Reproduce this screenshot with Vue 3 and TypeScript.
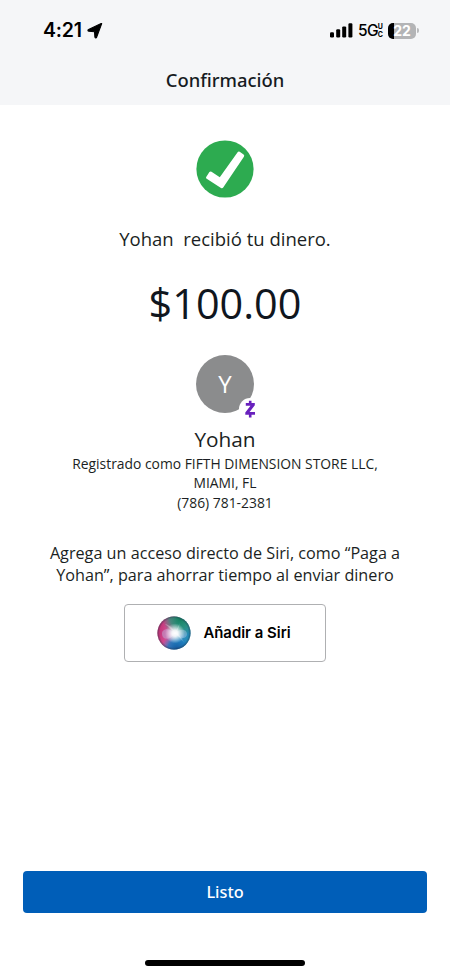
<script setup lang="ts">
const recipient = 'Yohan'
const amount = '$100.00'
const signalBars: { x: number; y: number; h: number }[] = [
  { x: 0, y: 9.2, h: 5.3 },
  { x: 6.2, y: 6.3, h: 8.2 },
  { x: 12.2, y: 3.4, h: 11.1 },
  { x: 18.4, y: 0.3, h: 14.2 },
]
</script>

<template>
  <main class="screen">
    <header class="header">
      <div class="status">
        <div class="clock">
          <span class="time">4:21</span>
          <svg class="location" width="16" height="16" viewBox="0 0 16 16">
            <path d="M14.6 .9 9.6 14.2C9.200 15.200 8 15 7.900 13.900L7.500 8.700 1.900 8.300C.8 8.200.6 7 1.600 6.600L14.200 .6C14.600.4 14.800.500 14.600.9Z" stroke="#000" stroke-width="1.1" stroke-linejoin="round" />
          </svg>
        </div>
        <div class="indicators">
          <svg width="23" height="15" viewBox="0 0 23 15">
            <rect v-for="bar in signalBars" :key="bar.x" :x="bar.x" :y="bar.y" width="4" :height="bar.h" rx="1.2" />
          </svg>
          <span class="network">5G</span>
          <span class="band"><span>U</span><span>C</span></span>
          <div class="battery"><span>22</span></div>
          <span class="battery-tip"></span>
        </div>
      </div>
      <h1 class="title">Confirmación</h1>
    </header>

    <section class="content">
      <svg class="check" width="58" height="58" viewBox="0 0 58 58">
        <circle cx="29" cy="29" r="28.600" fill="#2dab50" />
        <path d="M10.200 36.900 13.400 32.100Q14.300 31.100 15.500 31.800L23.800 37.200 41.600 12.200Q42.500 11 43.700 11.800L47.600 14.600Q48.700 15.500 47.900 16.700L27.200 47.500Q26.300 48.700 25 47.900L10.700 38.800Q9.500 38 10.200 36.900Z" fill="#fff" />
      </svg>
      <p class="message">{{ recipient }}&nbsp; recibió tu dinero.</p>
      <p class="amount">{{ amount }}</p>

      <div class="avatar">
        <span>Y</span>
        <svg class="zelle" width="22" height="22" viewBox="0 0 22 22">
          <circle cx="11" cy="11" r="11" fill="#fff" />
          <path d="M6.800 5H15.800V7.200L10.600 14.100H16V16.800H6.300V14.600L11.500 7.700H6.800ZM9.900 2.800H12.500V6H9.900ZM9.900 16H12.500V19.400H9.900Z" fill="#6820bd" />
        </svg>
      </div>
      <h2 class="name">{{ recipient }}</h2>
      <p class="details">
        <span>Registrado como FIFTH DIMENSION STORE LLC,</span><br />
        <span>MIAMI, FL</span><br />
        <span>(786) 781-2381</span>
      </p>
      <p class="hint">
        Agrega un acceso directo de Siri, como “Paga a<br />
        Yohan”, para ahorrar tiempo al enviar dinero
      </p>
      <button class="siri" type="button">
        <svg width="34" height="34" viewBox="0 0 34 34">
          <defs>
            <linearGradient id="orb" x1="0" y1=".4" x2="1" y2=".6">
              <stop offset="0" stop-color="#c02c70" />
              <stop offset=".38" stop-color="#d75a9f" />
              <stop offset=".6" stop-color="#4b9fc0" />
              <stop offset="1" stop-color="#1a86b4" />
            </linearGradient>
            <radialGradient id="green" cx=".68" cy=".08" r=".52">
              <stop offset="0" stop-color="#12805e" />
              <stop offset=".55" stop-color="#249174" stop-opacity=".8" />
              <stop offset="1" stop-color="#249174" stop-opacity="0" />
            </radialGradient>
            <radialGradient id="blue" cx=".58" cy="1" r=".46">
              <stop offset="0" stop-color="#15549b" />
              <stop offset=".6" stop-color="#1976bd" stop-opacity=".8" />
              <stop offset="1" stop-color="#2386cc" stop-opacity="0" />
            </radialGradient>
            <radialGradient id="glow" cx=".53" cy=".51" r=".3">
              <stop offset="0" stop-color="#fff" />
              <stop offset=".3" stop-color="#fff" stop-opacity=".9" />
              <stop offset="1" stop-color="#fff" stop-opacity="0" />
            </radialGradient>
            <radialGradient id="rim">
              <stop offset=".86" stop-color="#263448" stop-opacity="0" />
              <stop offset="1" stop-color="#263448" stop-opacity=".5" />
            </radialGradient>
          </defs>
          <circle cx="17" cy="17" r="16.600" fill="url(#orb)" />
          <circle cx="17" cy="17" r="16.600" fill="url(#green)" />
          <circle cx="17" cy="17" r="16.600" fill="url(#blue)" />
          <path d="M18 17C13 12 5 12 5 18s8 7 13-1c5-5 12-4 12 1s-7 6-12-1Z" fill="#b8cbed" opacity=".4" />
          <path d="M18 17 8 8C13 9 16 12 18 17L23 7 20 16 27 26Z" fill="#fff" opacity=".3" />
          <circle cx="17" cy="17" r="16.600" fill="url(#glow)" />
          <circle cx="17" cy="17" r="16.600" fill="url(#rim)" />
        </svg>
        <span>Añadir a Siri</span>
      </button>
    </section>

    <footer class="footer">
      <button class="done" type="button">Listo</button>
      <div class="home"></div>
    </footer>
  </main>
</template>

<style>
body {
  margin: 0;
  background: #fff;
}
</style>

<style scoped>
.screen {
  display: flex;
  flex-direction: column;
  width: 450px;
  height: 975px;
  overflow: hidden;
  background: #fff;
  color: #1b1f23;
  font-family: 'Open Sans', 'Noto Sans', sans-serif;
  text-align: center;
}
h1, h2, p { margin: 0; font-weight: 400; }
svg { display: block; flex: none; }
button { box-sizing: border-box; padding: 0; font: inherit; }

.header {
  box-sizing: border-box;
  height: 105px;
  background: #f5f6f8;
}
.status {
  box-sizing: border-box;
  display: flex;
  justify-content: space-between;
  height: 60px;
  padding: 20px 31px 0 43px;
  color: #000;
  font-family: Inter, sans-serif;
}
.clock, .indicators { display: flex; height: 21px; align-items: center; }
.time { font-size: 19.5px; font-weight: 600; line-height: 21px; letter-spacing: -.2px; }
.location { margin-left: 5px; }
.network { margin-left: 5px; font-size: 15.5px; font-weight: 500; letter-spacing: -.7px; }
.band { display: flex; flex-direction: column; margin-left: 0; margin-right: 1px; font-size: 7px; font-weight: 700; line-height: 8px; }
.battery {
  width: 28px;
  height: 16px;
  margin-left: 4px;
  border-radius: 5px;
  background: linear-gradient(90deg, #000 6px, #b3b4b6 6px);
  color: #fff;
  font-size: 14px;
  font-weight: 700;
  line-height: 16px;
}
.battery-tip { width: 2px; height: 5px; margin-left: 1px; border-radius: 0 2px 2px 0; background: #b9babc; }
.title { color: #161b22; font-family: 'Noto Sans', 'Open Sans', sans-serif; font-size: 18.4px; font-weight: 500; line-height: 40px; }

.content {
  display: flex;
  flex: 1;
  flex-direction: column;
  align-items: center;
}
.check { margin-top: 35px; }
.message { margin-top: 27px; font-size: 18.5px; line-height: 28px; }
.amount { margin-top: 20px; color: #10161e; font-size: 41.4px; line-height: 60px; }
.avatar {
  position: relative;
  width: 58px;
  height: 58px;
  margin-top: 22px;
  border-radius: 50%;
  background: #8b8c8d;
  color: #fff;
  font-size: 24px;
  line-height: 58px;
}
.zelle { position: absolute; left: 43px; top: 43px; }
.name { margin-top: 11px; font-size: 20.8px; line-height: 30px; }
.details { font-size: 13.86px; line-height: 19.4px; }
.hint { margin-top: 30px; font-size: 16.2px; line-height: 22px; }
.siri {
  display: flex;
  align-items: center;
  justify-content: center;
  gap: 12px;
  width: 202px;
  height: 58px;
  margin-top: 17.4px;
  padding-right: 2px;
  border: 1px solid #afb0b2;
  border-radius: 4px;
  background: #fff;
  color: #000;
  font-family: Inter, sans-serif;
  font-size: 14.9px;
  font-weight: 600;
}

.footer { display: flex; flex-direction: column; align-items: center; height: 104px; }
.done {
  width: 404px;
  height: 41.5px;
  border: 0;
  border-radius: 4px;
  background: #005eb8;
  color: #fff;
  font-family: 'Noto Sans', 'Open Sans', sans-serif;
  font-size: 16.3px;
  font-weight: 500;
  line-height: 42px;
}
.home { width: 160px; height: 6px; margin-top: 47px; border-radius: 3px; background: #000; }
</style>
